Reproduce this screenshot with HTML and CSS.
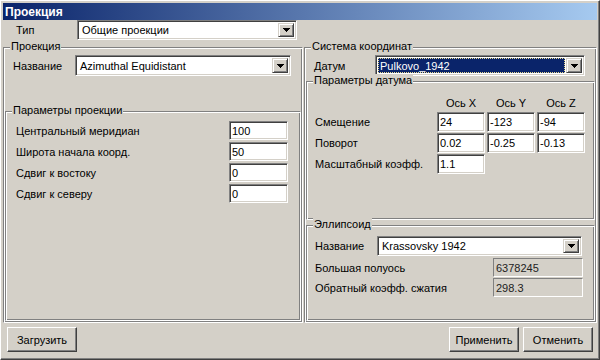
FILE: index.html
```html
<!DOCTYPE html>
<html lang="ru">
<head>
    <meta charset="UTF-8">
    <title>Проекция</title>
    <link rel="stylesheet" href="styles.css">
</head>
<body>
    <div class="window">
        <div class="titlebar">Проекция</div>

        <div class="type-row">
            <span class="type-lbl">Тип</span>
            <div class="combo type-combo">
                <span class="combo-text">Общие проекции</span>
                <span class="drop"><svg width="7" height="4"><path d="M0 0h7v1H0zM1 1h5v1H1zM2 2h3v1H2zM3 3h1v1H3z"/></svg></span>
            </div>
        </div>

        <div class="groups">
            <!-- left: projection -->
            <div class="group proj">
                <span class="legend">Проекция</span>
                <div class="name-row">
                    <span class="name-lbl">Название</span>
                    <div class="combo proj-combo">
                        <span class="combo-text">Azimuthal Equidistant</span>
                        <span class="drop"><svg width="7" height="4"><path d="M0 0h7v1H0zM1 1h5v1H1zM2 2h3v1H2zM3 3h1v1H3z"/></svg></span>
                    </div>
                </div>

                <div class="group params">
                    <span class="legend">Параметры проекции</span>
                    <div class="param-grid">
                        <span class="lbl">Центральный меридиан</span>
                        <div class="field">100</div>
                        <span class="lbl">Широта начала коорд.</span>
                        <div class="field">50</div>
                        <span class="lbl">Сдвиг к востоку</span>
                        <div class="field">0</div>
                        <span class="lbl">Сдвиг к северу</span>
                        <div class="field">0</div>
                    </div>
                </div>
            </div>

            <!-- right: coordinate system -->
            <div class="group coords">
                <span class="legend">Система координат</span>
                <div class="datum-row">
                    <span class="datum-lbl">Датум</span>
                    <div class="combo datum-combo">
                        <span class="combo-text selected">Pulkovo_1942</span>
                        <span class="drop"><svg width="7" height="4"><path d="M0 0h7v1H0zM1 1h5v1H1zM2 2h3v1H2zM3 3h1v1H3z"/></svg></span>
                    </div>
                </div>

                <div class="group datum-params">
                    <span class="legend">Параметры датума</span>
                    <div class="datum-grid">
                        <span></span>
                        <span class="axis">Ось X</span>
                        <span class="axis">Ось Y</span>
                        <span class="axis">Ось Z</span>

                        <span class="lbl">Смещение</span>
                        <div class="field">24</div>
                        <div class="field">-123</div>
                        <div class="field">-94</div>

                        <span class="lbl">Поворот</span>
                        <div class="field">0.02</div>
                        <div class="field">-0.25</div>
                        <div class="field">-0.13</div>

                        <span class="lbl">Масштабный коэфф.</span>
                        <div class="field">1.1</div>
                    </div>
                </div>

                <div class="group ellipsoid">
                    <span class="legend">Эллипсоид</span>
                    <div class="ell-row">
                        <span class="ell-lbl">Название</span>
                        <div class="combo ell-combo">
                            <span class="combo-text">Krassovsky 1942</span>
                            <span class="drop"><svg width="7" height="4"><path d="M0 0h7v1H0zM1 1h5v1H1zM2 2h3v1H2zM3 3h1v1H3z"/></svg></span>
                        </div>
                    </div>
                    <div class="ell-grid">
                        <span class="lbl">Большая полуось</span>
                        <div class="field readonly">6378245</div>
                        <span class="lbl">Обратный коэфф. сжатия</span>
                        <div class="field readonly">298.3</div>
                    </div>
                </div>
            </div>
        </div>

        <div class="buttons">
            <button class="btn">Загрузить</button>
            <button class="btn btn-apply">Применить</button>
            <button class="btn">Отменить</button>
        </div>
    </div>
</body>
</html>
```

FILE: styles.css
```css
body {
    margin: 0;
    font-family: "Liberation Sans", Arial, sans-serif;
    font-size: 11px;
    color: #000;
    background: #d4d0c8;
}

.window {
    width: 600px;
    height: 360px;
    box-sizing: border-box;
    background: #d4d0c8;
    border: 1px solid;
    border-color: #fff #404040 #404040 #fff;
    box-shadow: inset -1px -1px #808080;
    padding: 2px;
}

.titlebar {
    height: 17px;
    display: flex;
    align-items: center;
    padding-left: 2px;
    background: linear-gradient(to right, #0a246a, #a6caf0);
    color: #fff;
    font-weight: bold;
    font-size: 12px;
}

/* combo boxes */
.combo {
    display: flex;
    box-sizing: border-box;
    height: 21px;
    padding: 2px;
    background: #fff;
    border: 1px solid;
    border-color: #808080 #fff #fff #808080;
    box-shadow: inset 1px 1px #404040, inset -1px -1px #d4d0c8;
}

.combo-text {
    flex: 1;
    display: flex;
    align-items: center;
    padding-left: 2px;
    white-space: nowrap;
}

.combo-text.selected {
    background: #0a246a;
    color: #fff;
    outline: 1px dotted #e8d890;
    outline-offset: -1px;
    margin-right: 1px;
}

.drop {
    width: 16px;
    box-sizing: border-box;
    display: flex;
    align-items: center;
    justify-content: center;
    background: #d4d0c8;
    border: 1px solid;
    border-color: #d4d0c8 #404040 #404040 #d4d0c8;
    box-shadow: inset 1px 1px #fff, inset -1px -1px #808080;
}

.drop svg {
    display: block;
}

/* text fields */
.field {
    box-sizing: border-box;
    display: flex;
    align-items: center;
    padding-left: 2px;
    background: #fff;
    border: 1px solid;
    border-color: #808080 #fff #fff #808080;
    box-shadow: inset 1px 1px #404040, inset -1px -1px #d4d0c8;
}

.field.readonly {
    background: #d4d0c8;
    box-shadow: none;
    color: #222;
}

.lbl {
    display: flex;
    align-items: center;
}

/* group boxes */
.group {
    position: relative;
    box-sizing: border-box;
    border: 1px solid;
    border-color: #808080 #fff #fff #808080;
    box-shadow: inset 1px 1px #fff, inset -1px -1px #808080;
}

.legend {
    position: absolute;
    top: -8px;
    left: 6px;
    padding: 0 1px;
    line-height: 13px;
    background: #d4d0c8;
}

.type-row {
    display: flex;
    align-items: center;
    height: 20px;
    padding-left: 13px;
}

.type-lbl {
    width: 61px;
}

.type-combo {
    width: 220px;
    height: 20px;
}

.groups {
    display: flex;
    gap: 1px;
    margin-top: 7px;
}

.proj {
    width: 300px;
    height: 276px;
    padding-top: 7px;
}

.coords {
    width: 293px;
    height: 276px;
    padding-top: 7px;
}

.name-row,
.datum-row,
.ell-row {
    display: flex;
    align-items: center;
}

.name-row {
    padding-left: 9px;
}

.name-lbl {
    width: 62px;
}

.proj-combo {
    width: 216px;
}

.params {
    width: 296px;
    height: 210px;
    margin: 35px 0 0 1px;
    padding: 9px 0 0 10px;
}

.param-grid {
    display: grid;
    grid-template-columns: 213px 59px;
    grid-auto-rows: 19px;
    row-gap: 2px;
}

.datum-row {
    padding-left: 9px;
}

.datum-lbl {
    width: 61px;
}

.datum-combo {
    width: 210px;
}

.datum-params {
    width: 289px;
    height: 139px;
    margin: 5px 0 0 1px;
    padding: 13px 0 0 8px;
}

.datum-grid {
    display: grid;
    grid-template-columns: 120px 48px 48px 48px;
    grid-template-rows: 16px 20px 20px 20px;
    column-gap: 2px;
    row-gap: 1px;
}

.axis {
    display: flex;
    align-items: center;
    justify-content: center;
}

.ellipsoid {
    width: 289px;
    height: 96px;
    margin: 5px 0 0 1px;
    padding: 10px 0 0 8px;
}

.ell-lbl {
    width: 62px;
}

.ell-combo {
    width: 205px;
    height: 20px;
}

.ell-grid {
    display: grid;
    grid-template-columns: 178px 90px;
    grid-auto-rows: 19px;
    row-gap: 1px;
    margin-top: 2px;
}

/* bottom buttons */
.buttons {
    display: flex;
    gap: 4px;
    margin-top: 4px;
    padding: 0 4px;
}

.btn {
    width: 70px;
    height: 25px;
    padding: 0;
    font-family: inherit;
    font-size: 11px;
    color: #000;
    background: #d4d0c8;
    border: 1px solid;
    border-color: #fff #404040 #404040 #fff;
    box-shadow: inset -1px -1px #808080;
}

.btn-apply {
    margin-left: auto;
}
```
